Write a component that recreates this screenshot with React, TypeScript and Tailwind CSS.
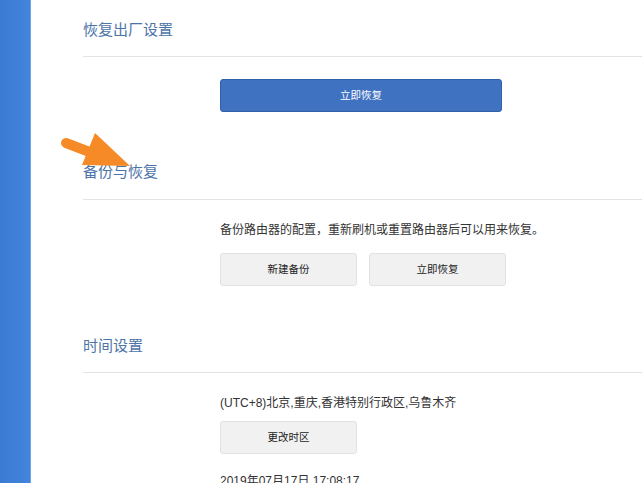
import React from "react";

const GrayButton: React.FC<{ label: string }> = ({ label }) => (
  <button className="h-[33px] w-[137px] rounded-[3px] border border-[#e2e2e2] bg-[#f1f1f1] text-[10.5px] text-[#222]">
    {label}
  </button>
);

const SectionTitle: React.FC<{ title: string; className?: string }> = ({ title, className = "" }) => (
  <div className={`border-b border-[#e3e3e3] pb-[16px] ${className}`}>
    <h2 className="text-[15px] leading-[20px] text-[#4d74a8]">{title}</h2>
  </div>
);

export default function App() {
  return (
    <div className="relative flex h-[483px] w-[642px] overflow-hidden bg-white font-['Liberation_Sans','Noto_Sans_CJK_SC',sans-serif]">
      {/* Sidebar */}
      <div className="w-[31px] shrink-0 border-r border-[#6fa2e4] bg-gradient-to-r from-[#3a7ad3] to-[#4285dc]" />

      <div className="flex flex-1 flex-col pl-[52px]">
        {/* 恢复出厂设置 */}
        <SectionTitle title="恢复出厂设置" className="mt-[20px]" />
        <div className="mt-[22px] pl-[137px]">
          <button className="h-[33px] w-[282px] rounded-[3px] border border-[#2f60a9] bg-[#3f72c0] text-[10.5px] text-white">
            立即恢复
          </button>
        </div>

        {/* 备份与恢复 */}
        <SectionTitle title="备份与恢复" className="mt-[50px] pb-[17px]" />
        <div className="flex flex-col pl-[137px]">
          <p className="mt-[21px] text-[12px] leading-[18px] text-[#333]">
            备份路由器的配置，重新刷机或重置路由器后可以用来恢复。
          </p>
          <div className="mt-[14px] flex gap-[12px]">
            <GrayButton label="新建备份" />
            <GrayButton label="立即恢复" />
          </div>
        </div>

        {/* 时间设置 */}
        <SectionTitle title="时间设置" className="mt-[50px]" />
        <div className="flex flex-col pl-[137px]">
          <p className="mt-[21px] text-[12px] leading-[18px] text-[#333]">
            (UTC+8)北京,重庆,香港特别行政区,乌鲁木齐
          </p>
          <div className="mt-[9px]">
            <GrayButton label="更改时区" />
          </div>
          <p className="mt-[18px] text-[12px] leading-[18px] text-[#333]">2019年07月17日 17:08:17</p>
        </div>
      </div>

      {/* Annotation arrow */}
      <svg className="absolute left-0 top-0" width="642" height="483" viewBox="0 0 642 483">
        <line x1="66" y1="143" x2="100" y2="156" stroke="#f58a27" strokeWidth="10" strokeLinecap="round" />
        <polygon points="95,133 130,166 82,165" fill="#f58a27" />
      </svg>
    </div>
  );
}
